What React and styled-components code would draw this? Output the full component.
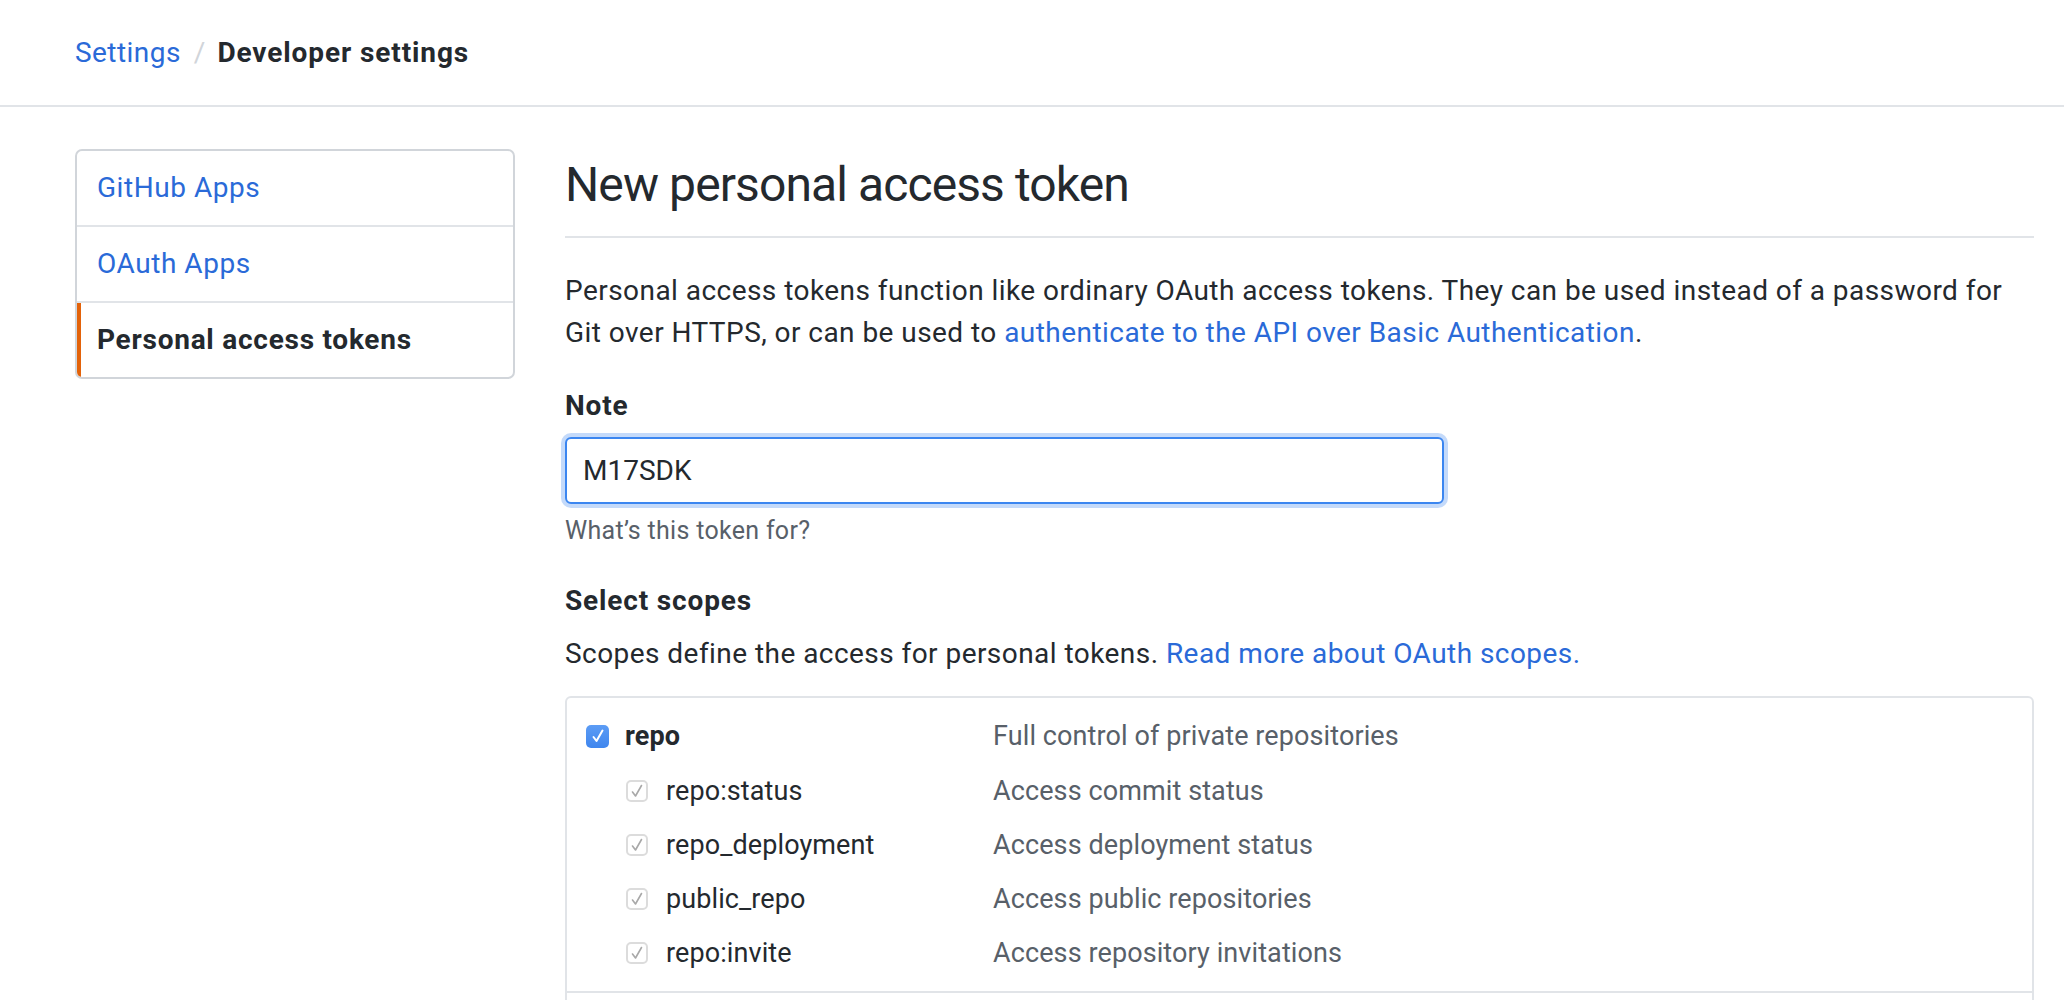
import React from "react";
import styled, { createGlobalStyle } from "styled-components";

const Global = createGlobalStyle`
  html, body { margin: 0; padding: 0; background: #fff; }
  body {
    font-family: Roboto, "Liberation Sans", sans-serif;
    color: #24292e;
    -webkit-font-smoothing: antialiased;
  }
  * { box-sizing: border-box; }
`;

const LINK = "#2a6ad8";

const Header = styled.header`
  height: 107px;
  border-bottom: 2px solid #e1e4e8;
  display: flex;
  align-items: center;
  padding: 0 75px;
  font-size: 28px;
  line-height: 42px;
`;

const Crumb = styled.a`
  color: ${LINK};
  text-decoration: none;
  letter-spacing: 0.45px;
`;

const Sep = styled.span`
  color: #d1d5da;
  margin: 0 12px 0 13px;
`;

const Current = styled.strong`
  font-weight: 700;
  color: #24292e;
  letter-spacing: 0.9px;
`;

const Layout = styled.div`
  display: flex;
  gap: 50px;
  padding: 42px 30px 0 75px;
`;

const SideMenu = styled.nav`
  flex: 0 0 440px;
  align-self: flex-start;
  border: 2px solid #d1d5da;
  border-radius: 7px;
  overflow: hidden;
`;

const MenuItem = styled.a`
  display: block;
  padding: 16px 20px;
  font-size: 28px;
  line-height: 42px;
  text-decoration: none;
  color: ${(p) => (p.$active ? "#24292e" : LINK)};
  font-weight: ${(p) => (p.$active ? 700 : 400)};
  letter-spacing: ${(p) => (p.$active ? "0.75px" : "0.55px")};
  box-shadow: ${(p) => (p.$active ? "inset 4px 0 0 #e36209" : "none")};
  & + & { border-top: 2px solid #e1e4e8; }
`;

const Main = styled.main`
  flex: 1;
  min-width: 0;
`;

const Title = styled.h2`
  margin: 0 0 32px;
  padding-bottom: 15px;
  border-bottom: 2px solid #e1e4e8;
  font-size: 48px;
  line-height: 72px;
  font-weight: 400;
  letter-spacing: -0.9px;
`;

const Text = styled.p`
  margin: 0;
  font-size: 28px;
  line-height: 42px;
  letter-spacing: 0.45px;
`;

const Link = styled.a`
  color: ${LINK};
  text-decoration: none;
`;

const Label = styled.label`
  display: block;
  margin: 31px 0 10px;
  font-size: 28px;
  line-height: 42px;
  font-weight: 700;
  letter-spacing: 0.8px;
`;

const Input = styled.input`
  display: block;
  width: 879px;
  height: 67px;
  padding: 0 16px;
  font: inherit;
  font-size: 28px;
  color: #24292e;
  border: 2px solid #3b86f0;
  border-radius: 6px;
  outline: none;
  box-shadow: 0 0 0 4px rgba(59, 134, 240, 0.3);
`;

const Note = styled.p`
  margin: 9px 0 0;
  font-size: 25px;
  line-height: 36px;
  letter-spacing: 0.3px;
  color: #586069;
`;

const SubHead = styled.h3`
  margin: 31px 0 11px;
  font-size: 28px;
  line-height: 42px;
  font-weight: 700;
  letter-spacing: 0.85px;
`;

const ScopeBox = styled.div`
  margin-top: 21px;
  border: 2px solid #e1e4e8;
  border-radius: 6px;
`;

const Group = styled.div`
  padding: 10px 19px 11px;
  border-bottom: 2px solid #e1e4e8;
`;

const Row = styled.div`
  display: grid;
  grid-template-columns: 407px 1fr;
  align-items: center;
  height: ${(p) => (p.$top ? "56px" : "54px")};
  font-size: 27px;
  line-height: 42px;
  letter-spacing: 0.1px;
`;

const Name = styled.div`
  display: flex;
  align-items: center;
  gap: ${(p) => (p.$child ? "18px" : "16px")};
  padding-left: ${(p) => (p.$child ? "40px" : "0")};
  font-weight: ${(p) => (p.$child ? 400 : 700)};
`;

const Desc = styled.div`
  color: #586069;
`;

const Box = styled.span`
  flex: 0 0 auto;
  width: ${(p) => (p.$on ? "23px" : "22px")};
  height: ${(p) => (p.$on ? "23px" : "22px")};
  border-radius: 5px;
  display: flex;
  align-items: center;
  justify-content: center;
  background: ${(p) => (p.$on ? "linear-gradient(#5c9cf5, #3f86ee)" : "#fff")};
  border: ${(p) => (p.$on ? "none" : "2px solid #dcdcdc")};
`;

const Check = ({ on }) => (
  <Box $on={on}>
    <svg width="12" height="14" viewBox="0 0 12 14">
      <path
        d="M1.5 8 L4.5 12 L10.5 1.5"
        fill="none"
        stroke={on ? "#fff" : "#a8a8a8"}
        strokeWidth={on ? 2 : 1.6}
        strokeLinecap="round"
        strokeLinejoin="round"
      />
    </svg>
  </Box>
);

const scopes = [
  ["repo:status", "Access commit status"],
  ["repo_deployment", "Access deployment status"],
  ["public_repo", "Access public repositories"],
  ["repo:invite", "Access repository invitations"],
];

export default function App() {
  return (
    <>
      <Global />
      <Header>
        <Crumb href="#">Settings</Crumb>
        <Sep>/</Sep>
        <Current>Developer settings</Current>
      </Header>
      <Layout>
        <SideMenu>
          <MenuItem href="#">GitHub Apps</MenuItem>
          <MenuItem href="#">OAuth Apps</MenuItem>
          <MenuItem href="#" $active>Personal access tokens</MenuItem>
        </SideMenu>
        <Main>
          <Title>New personal access token</Title>
          <Text>
            Personal access tokens function like ordinary OAuth access tokens. They can be used instead of a password for Git over HTTPS, or can be used to{" "}
            <Link href="#">authenticate to the API over Basic Authentication</Link>.
          </Text>
          <Label htmlFor="note">Note</Label>
          <Input id="note" defaultValue="M17SDK" />
          <Note>What’s this token for?</Note>
          <SubHead>Select scopes</SubHead>
          <Text>
            Scopes define the access for personal tokens.{" "}
            <Link href="#">Read more about OAuth scopes.</Link>
          </Text>
          <ScopeBox>
            <Group>
              <Row $top>
                <Name>
                  <Check on />
                  repo
                </Name>
                <Desc>Full control of private repositories</Desc>
              </Row>
              {scopes.map(([n, d]) => (
                <Row key={n}>
                  <Name $child>
                    <Check />
                    {n}
                  </Name>
                  <Desc>{d}</Desc>
                </Row>
              ))}
            </Group>
            <Group>
              <Row $top>
                <Name>
                  <Check />
                  admin:org
                </Name>
                <Desc>Full control of orgs and teams, read and write org projects</Desc>
              </Row>
            </Group>
          </ScopeBox>
        </Main>
      </Layout>
    </>
  );
}
